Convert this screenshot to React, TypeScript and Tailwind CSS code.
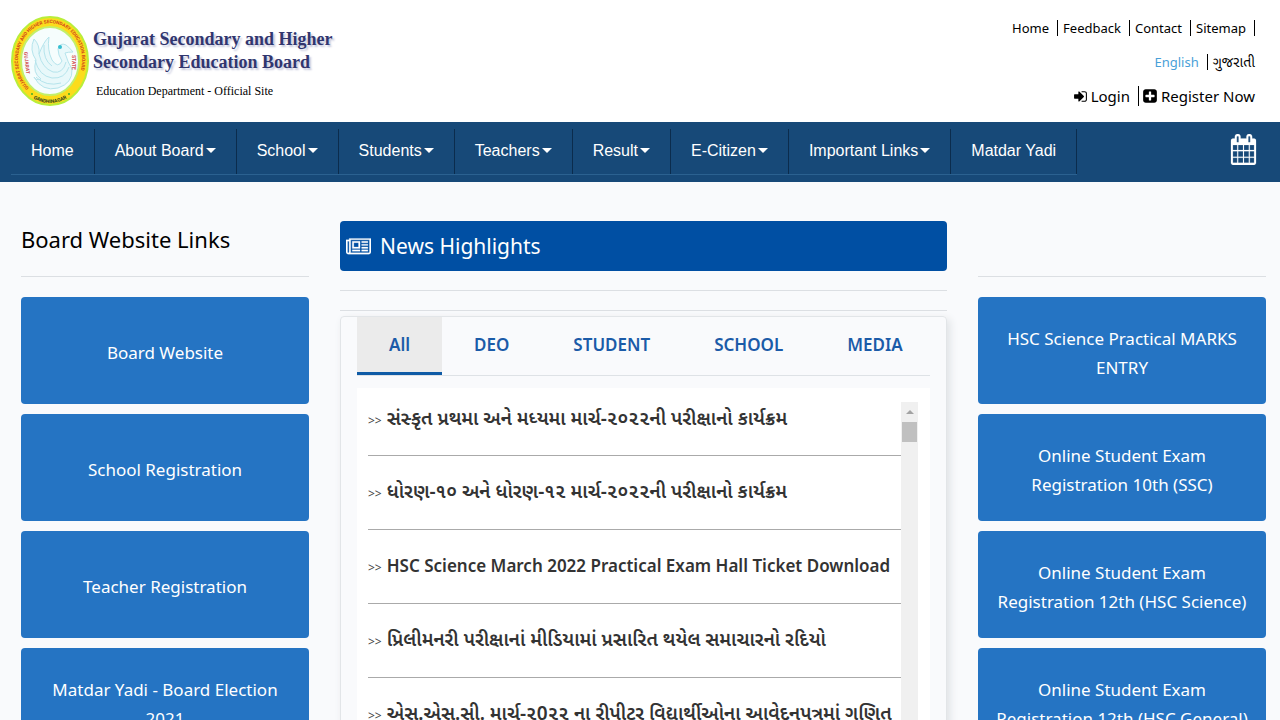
import { useState } from "react";

type NavItem = { label: string; menu: boolean };

const navItems: NavItem[] = [
  { label: "Home", menu: false },
  { label: "About Board", menu: true },
  { label: "School", menu: true },
  { label: "Students", menu: true },
  { label: "Teachers", menu: true },
  { label: "Result", menu: true },
  { label: "E-Citizen", menu: true },
  { label: "Important Links", menu: true },
  { label: "Matdar Yadi", menu: false },
];

const leftLinks = [
  "Board Website",
  "School Registration",
  "Teacher Registration",
  "Matdar Yadi - Board Election 2021",
];

const rightLinks = [
  "HSC Science Practical MARKS ENTRY",
  "Online Student Exam Registration 10th (SSC)",
  "Online Student Exam Registration 12th (HSC Science)",
  "Online Student Exam Registration 12th (HSC General)",
];

const tabs = ["All", "DEO", "STUDENT", "SCHOOL", "MEDIA"];

const news = [
  { lang: "gu", title: "સંસ્કૃત પ્રથમા અને મધ્યમા માર્ચ-૨૦૨૨ની પરીક્ષાનો કાર્યક્રમ" },
  { lang: "gu", title: "ધોરણ-૧૦ અને ધોરણ-૧૨ માર્ચ-૨૦૨૨ની પરીક્ષાનો કાર્યક્રમ" },
  { lang: "en", title: "HSC Science March 2022 Practical Exam Hall Ticket Download" },
  { lang: "gu", title: "પ્રિલીમનરી પરીક્ષાનાં મીડિયામાં પ્રસારિત થયેલ સમાચારનો રદિયો" },
  { lang: "gu", title: "એસ.એસ.સી. માર્ચ-૨0૨૨ ના રીપીટર વિદ્યાર્થીઓના આવેદનપત્રમાં ગણિત" },
];

const icons = {
  signIn:
    "M1312 896q0 26-19 45l-544 544q-19 19-45 19t-45-19-19-45v-288h-448q-26 0-45-19t-19-45v-384q0-26 19-45t45-19h448v-288q0-26 19-45t45-19 45 19l544 544q19 19 19 45zm352-352v704q0 119-84.5 203.5t-203.5 84.5h-320q-13 0-22.5-9.5t-9.5-22.5q0-4-1-20t-.5-26.5 3-23.5 10-19.5 20.5-6.5h320q66 0 113-47t47-113v-704q0-66-47-113t-113-47h-312l-11.5-1-11.5-3-8-5.5-7-9-2-13.5q0-4-1-20t-.5-26.5 3-23.5 10-19.5 20.5-6.5h320q119 0 203.5 84.5t84.5 203.5z",
  plus:
    "M1408 960v-128q0-26-19-45t-45-19h-320v-320q0-26-19-45t-45-19h-128q-26 0-45 19t-19 45v320h-320q-26 0-45 19t-19 45v128q0 26 19 45t45 19h320v320q0 26 19 45t45 19h128q26 0 45-19t19-45v-320h320q26 0 45-19t19-45zm256-544v960q0 119-84.5 203.5t-203.5 84.5h-960q-119 0-203.5-84.5t-84.5-203.5v-960q0-119 84.5-203.5t203.5-84.5h960q119 0 203.5 84.5t84.5 203.5z",
  calendar:
    "M192 1664h288v-288h-288v288zm352 0h320v-288h-320v288zm-352-352h288v-320h-288v320zm352 0h320v-320h-320v320zm-352-384h288v-288h-288v288zm736 736h320v-288h-320v288zm-384-736h320v-288h-320v288zm768 736h288v-288h-288v288zm-384-352h320v-320h-320v320zm-352-864v-288q0-13-9.5-22.5t-22.5-9.5h-64q-13 0-22.5 9.5t-9.5 22.5v288q0 13 9.5 22.5t22.5 9.5h64q13 0 22.5-9.5t9.5-22.5zm736 864h288v-320h-288v320zm-384-384h320v-288h-320v288zm384 0h288v-288h-288v288zm32-480v-288q0-13-9.5-22.5t-22.5-9.5h-64q-13 0-22.5 9.5t-9.5 22.5v288q0 13 9.5 22.5t22.5 9.5h64q13 0 22.5-9.5t9.5-22.5zm384-64v1280q0 52-38 90t-90 38h-1408q-52 0-90-38t-38-90v-1280q0-52 38-90t90-38h128v-96q0-66 47-113t113-47h64q66 0 113 47t47 113v96h384v-96q0-66 47-113t113-47h64q66 0 113 47t47 113v96h128q52 0 90 38t38 90z",
  newspaper:
    "M1024 512h-384v384h384v-384zm128 640v128h-640v-128h640zm0-768v640h-640v-640h640zm640 768v128h-512v-128h512zm0-256v128h-512v-128h512zm0-256v128h-512v-128h512zm0-256v128h-512v-128h512zm-1536 960v-960h-128v960q0 26 19 45t45 19 45-19 19-45zm1664 0v-1088h-1536v1088q0 33-11 64h1483q26 0 45-19t19-45zm128-1216v1216q0 80-56 136t-136 56h-1664q-80 0-136-56t-56-136v-1088h256v-128h1792z",
};

type IconProps = { d: string; className: string; box?: string; stroke?: number };

function Icon({ d, className, box = "0 0 1792 1792", stroke = 0 }: IconProps) {
  return (
    <svg
      viewBox={box}
      className={className}
      fill="currentColor"
      stroke="currentColor"
      strokeWidth={stroke}
      preserveAspectRatio="none"
      aria-hidden="true"
    >
      <path d={d} />
    </svg>
  );
}

function Emblem() {
  return (
    <svg viewBox="0 0 80 92" className="h-[92px] w-[80px] shrink-0" role="img" aria-label="GSHSEB emblem">
      <ellipse cx="40" cy="46" rx="38" ry="44" fill="#fbdc1c" stroke="#b9ee3a" strokeWidth="2" />
      <ellipse cx="40" cy="46" rx="29" ry="34" fill="#f6fdfd" stroke="#c3ef6a" strokeWidth="2" />
      <defs>
        <path id="ringTop" d="M19 73 A32 37 0 1 1 61 73" />
        <path id="ringBottom" d="M18 80 Q40 96 62 80" />
      </defs>
      <text fontSize="4.7" fontWeight="700" fill="#d0471a" fontFamily="Roboto, sans-serif">
        <textPath href="#ringTop">GUJARAT SECONDARY AND HIGHER SECONDARY EDUCATION BOARD</textPath>
      </text>
      <text fontSize="5" fontWeight="700" fill="#33451c" fontFamily="Roboto, sans-serif">
        <textPath href="#ringBottom" startOffset="50%" textAnchor="middle">GANDHINAGAR</textPath>
      </text>
      <circle cx="22" cy="79" r="1" fill="#3fae2a" />
      <circle cx="59" cy="79" r="1" fill="#3fae2a" />
      {/* swan */}
      <g fill="none" stroke="#b5e4ec" strokeWidth="1">
        <path d="M48 34 Q50 27 56 30 Q60 33 63 37 Q58 37 55 38 Q58 48 62 54 Q63 68 48 73 Q32 77 24 62 Q26 66 31 64 Q22 58 26 45 Q19 35 24 24 Q30 30 29 39 Q34 26 39 22 Q37 35 42 45 Q48 54 52 46 Q48 40 48 34Z" fill="#e8f8fa" />
        <path d="M25 45 Q29 61 42 63 Q55 64 59 52 M29 39 Q32 53 43 57 Q53 59 56 47 M26 62 Q36 72 51 68 M34 30 Q33 45 42 51" />
      </g>
      <circle cx="50" cy="32" r="2" fill="#36bfd0" />
      <text x="14" y="37" fontSize="5" fontWeight="700" fill="#d4504f" transform="rotate(84 14 37)" fontFamily="Roboto, sans-serif">GUJARAT</text>
      <text x="62" y="40" fontSize="5" fontWeight="700" fill="#d4504f" transform="rotate(90 62 40)" fontFamily="Roboto, sans-serif">STATE</text>
    </svg>
  );
}

function Header() {
  return (
    <header className="flex h-[122px] items-start justify-between bg-white pr-[25px] pl-[10px]">
      <a href="#" className="flex pt-[15px]">
        <Emblem />
        <div className="pt-[13px] pl-[3px] font-['Liberation_Serif',serif]">
          <div className="text-[18px] leading-[23px] font-bold text-[#31366f] [text-shadow:2px_2px_2px_#c5c8dc]">
            Gujarat Secondary and Higher
            <br />
            Secondary Education Board
          </div>
          <div className="pt-[10px] pl-[3px] text-[12px] leading-[15px] text-black">
            Education Department - Official Site
          </div>
        </div>
      </a>
      <div className="flex flex-col items-end text-black">
        <nav className="flex pt-5 text-[13px] leading-4">
          {["Home", "Feedback", "Contact", "Sitemap"].map((item) => (
            <a key={item} href="#" className="ml-[5px] border-r border-black pr-2">
              {item}
            </a>
          ))}
        </nav>
        <div className="flex pt-[18px] text-[13px] leading-4">
          <a href="#" className="border-r border-black pr-2 text-[#4a9fd8]">English</a>
          <a href="#" lang="gu" className="pl-[5px] text-[14px]">ગુજરાતી</a>
        </div>
        <div className="flex pt-4 text-[15px] leading-5">
          <a href="#" className="flex items-center gap-[3px] border-r border-black pr-2">
            <Icon d={icons.signIn} className="size-[15px]" />
            Login
          </a>
          <a href="#" className="flex items-center gap-[3px] pl-[3px]">
            <Icon d={icons.plus} className="size-[16px]" />
            Register Now
          </a>
        </div>
      </div>
    </header>
  );
}

function NavBar() {
  return (
    <nav className="flex h-[60px] items-center justify-between bg-[#174978] pr-[23px] pl-[11px] text-white">
      <ul className="flex h-[46px] border-b border-[#2b6190] font-['Liberation_Sans',sans-serif] text-[16px]">
        {navItems.map((item) => (
          <li key={item.label} className="flex border-r border-[#0b2c4d]">
            <a href="#" className="flex items-center gap-[2px] px-5 pb-[2px] whitespace-nowrap">
              {item.label}
              {item.menu && <span className="border-x-5 border-t-5 border-x-transparent border-t-white" />}
            </a>
          </li>
        ))}
      </ul>
      <button type="button" aria-label="Calendar" className="pb-[6px]">
        <Icon d={icons.calendar} stroke={10} className="h-[31px] w-[27px]" />
      </button>
    </nav>
  );
}

function LinkCards({ links }: { links: string[] }) {
  return (
    <div className="flex flex-col gap-[10px] border-t border-[#dcdfe3] pt-5">
      {links.map((link) => (
        <a
          key={link}
          href="#"
          className="flex h-[107px] items-center justify-center rounded bg-[#2574c3] px-3 pt-1 text-center text-[17px] leading-[29px] text-white"
        >
          {link}
        </a>
      ))}
    </div>
  );
}

function News() {
  const [active, setActive] = useState("All");

  return (
    <div className="col-span-2 pt-[39px]">
      <h2 className="flex h-[50px] items-center gap-[9px] rounded bg-[#004fa3] px-[6px] pt-[2px] text-[21px] text-white">
        <Icon d={icons.newspaper} box="0 0 2048 1792" stroke={20} className="h-5 w-[25px]" />
        News Highlights
      </h2>
      <hr className="mt-[19px] border-[#dcdfe3]" />
      <hr className="mt-[19px] border-[#dcdfe3]" />
      <section className="mt-[5px] rounded border border-[#e2e5e8] px-4 shadow-[3px_3px_8px_#dfe2e5]">
        <div role="tablist" className="flex border-b border-[#dee2e6]">
          {tabs.map((tab) => (
            <button
              key={tab}
              type="button"
              role="tab"
              aria-selected={active === tab}
              onClick={() => setActive(tab)}
              className={
                "h-[58px] border-b-3 px-8 text-[17px] font-semibold text-[#1b5ba8] " +
                (active === tab ? "border-[#0f5ba6] bg-[#ebebeb]" : "border-transparent")
              }
            >
              {tab}
            </button>
          ))}
        </div>
        <div className="mt-3 flex bg-white pt-[14px] pr-3 pl-[11px]">
          <ul className="min-w-0 flex-1 pb-4">
            {news.map((item) => (
              <li key={item.title} className="flex h-[74px] items-center border-b border-[#aaa] pb-[2px] first:h-[54px] first:pb-5">
                <span className="pt-1 pr-[5px] text-[12px] text-[#444]">&gt;&gt;</span>
                <a
                  href="#"
                  lang={item.lang}
                  className={
                    "font-semibold whitespace-nowrap text-[#333] " + (item.lang === "gu" ? "text-[19px]" : "text-[17px]")
                  }
                >
                  {item.title}
                </a>
              </li>
            ))}
          </ul>
          <div className="flex w-[17px] flex-col items-center bg-[#f0f0f0]" aria-hidden="true">
            <span className="mt-2 mb-2 border-x-4 border-b-4 border-x-transparent border-b-[#a3a3a3]" />
            <span className="h-5 w-[15px] bg-[#c0c0c0]" />
          </div>
        </div>
      </section>
    </div>
  );
}

export default function App() {
  return (
    <div className="h-screen overflow-hidden bg-[#f9fafc] font-['Noto_Sans','Noto_Sans_Gujarati',sans-serif]">
      <Header />
      <NavBar />
      <main className="grid grid-cols-4 gap-[31px] pr-[14px] pl-[21px]">
        <aside>
          <h2 className="flex h-[94px] items-center pt-5 text-[22px] text-black">Board Website Links</h2>
          <LinkCards links={leftLinks} />
        </aside>
        <News />
        <aside className="pt-[94px]">
          <LinkCards links={rightLinks} />
        </aside>
      </main>
    </div>
  );
}
